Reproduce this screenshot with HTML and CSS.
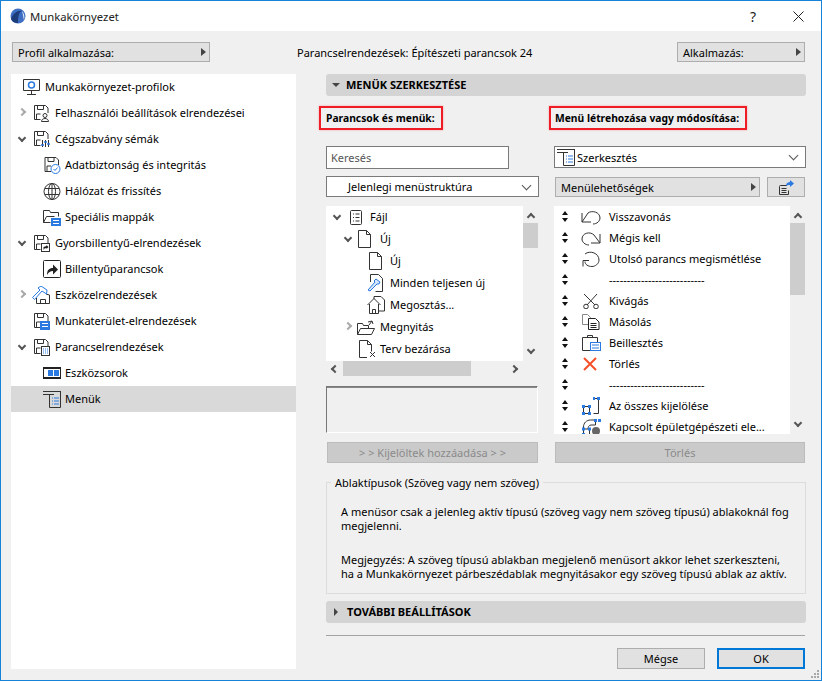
FILE: index.html
```html
<!DOCTYPE html>
<html lang="hu">
<head>
<meta charset="utf-8">
<title>Munkakörnyezet</title>
<link rel="stylesheet" href="styles.css">
</head>
<body>
<svg class="defs" width="0" height="0">
<defs>
<g id="floppy" fill="none" stroke="#333"><path d="M7.5 14.5h-6v-14h11l2.500 2.500v5"/><path d="M4.500 .5v4h6v-4M3.500 14v-5h4"/></g>
<g id="doc" fill="none" stroke="#333"><path d="M.5 .5h8l4 4v13h-12zM8.500 .5v4h4"/></g>
</defs>
</svg>
<div class="window">
  <header class="titlebar">
    <svg class="logo" width="16" height="16" viewBox="0 0 16 16"><circle cx="8" cy="8" r="7.500" fill="#3f6fc4"/><path d="M1 11C3 5 8 2 12 3c-3 1-4 5-4 12-3 0-6-1-7-4z" fill="#1d3d7a"/><path d="M12 3c2 2 3 6 2 9-1-3-1-6-2-9z" fill="#dfe8f7"/></svg>
    <span class="title">Munkakörnyezet</span>
    <span class="help">?</span>
    <svg class="close" width="11" height="11" viewBox="0 0 11 11"><path d="M.5 .5l10 10M10.500 .5l-10 10" stroke="#222" fill="none"/></svg>
  </header>
  <div class="toolbar">
    <button class="popup profile"><span>Profil alkalmazása:</span><i class="tri"></i></button>
    <span class="current">Parancselrendezések: Építészeti parancsok 24</span>
    <button class="popup apply"><span>Alkalmazás:</span><i class="tri"></i></button>
  </div>
  <div class="content">
    <nav class="tree">
      <div class="node l0"><svg class="ico" width="17" height="17" viewBox="0 0 17 17"><path d="M.5 .5h16v11H.5zM8.500 11.500v4M4 15.500h9" fill="none" stroke="#333"/><circle cx="8.500" cy="6" r="3" fill="none" stroke="#2a7ae2" stroke-width="1.500"/></svg><span>Munkakörnyezet-profilok</span></div>
      <div class="node l1"><i class="chev right"></i><svg class="ico" width="17" height="17" viewBox="0 0 17 17"><use href="#floppy"/><circle cx="12" cy="10.500" r="2" fill="none" stroke="#333"/><path d="M8.500 16.500c0-4 7-4 7 0z" fill="none" stroke="#333"/></svg><span>Felhasználói beállítások elrendezései</span></div>
      <div class="node l1"><i class="chev down"></i><svg class="ico" width="17" height="17" viewBox="0 0 17 17"><use href="#floppy"/><path d="M9.500 9v7M12.500 9v7M15.500 9v7" stroke="#333" fill="none"/><path d="M8 14h3M11 11h3M14 13h3" stroke="#2a7ae2" stroke-width="1.500" fill="none"/></svg><span>Cégszabvány sémák</span></div>
      <div class="node l2"><svg class="ico" width="17" height="17" viewBox="0 0 17 17"><use href="#floppy"/><circle cx="12" cy="12" r="4.500" fill="#fff" stroke="#2a7ae2"/><path d="M10 12l1.500 1.500 2.500-3" stroke="#2a7ae2" fill="none"/></svg><span>Adatbiztonság és integritás</span></div>
      <div class="node l2"><svg class="ico" width="17" height="17" viewBox="0 0 17 17"><g fill="none" stroke="#333"><circle cx="8.500" cy="8.500" r="8"/><ellipse cx="8.500" cy="8.500" rx="3.500" ry="8"/><path d="M1.500 5.500h14M1.500 11.500h14M8.500 .5v16"/></g></svg><span>Hálózat és frissítés</span></div>
      <div class="node l2"><svg class="ico" width="18" height="17" viewBox="0 0 18 17"><path d="M.5 13.500v-12h6l1 2h8v4M.5 13.500l3-6h8M.5 13.500h7" fill="none" stroke="#333"/><rect x="8" y="9" width="10" height="8" fill="#2a7ae2"/><path d="M10 11.500h6M10 14.500h6" stroke="#fff"/></svg><span>Speciális mappák</span></div>
      <div class="node l1"><i class="chev down"></i><svg class="ico" width="17" height="17" viewBox="0 0 17 17"><use href="#floppy"/><rect x="8.500" y="8.500" width="8" height="8" fill="#fff" stroke="#333"/><path d="M10.500 15v-3l3-1v-1l2 2-2 2v-1l-2 .5z" fill="#222"/></svg><span>Gyorsbillentyű-elrendezések</span></div>
      <div class="node l2"><svg class="ico" width="18" height="18" viewBox="0 0 18 18"><rect x=".5" y=".5" width="17" height="17" rx="1" fill="#fff" stroke="#222"/><path d="M4 15c0-5 2-7 6-7V4.500l5 5-5 5V11c-3 0-4 1-6 4z" fill="#222"/></svg><span>Billentyűparancsok</span></div>
      <div class="node l1"><i class="chev right"></i><svg class="ico wide" width="18" height="18" viewBox="0 0 18 18"><path d="M4.500 17.500V12M4.500 17.500h13V9L14 8M8.500 17.500v-4h5v4" fill="none" stroke="#333"/><path d="M6 2l3-2 6 4-.5 4L10 5 2.500 13.500l-2-2L8 4z" fill="#fff" stroke="#2a7ae2"/></svg><span>Eszközelrendezések</span></div>
      <div class="node l1 nochev"><svg class="ico" width="17" height="17" viewBox="0 0 17 17"><use href="#floppy"/><rect x="7" y="8" width="10" height="9" fill="#2a7ae2"/><path d="M9 10.500h6M9 13.500h6" stroke="#fff"/></svg><span>Munkaterület-elrendezések</span></div>
      <div class="node l1"><i class="chev down"></i><svg class="ico" width="17" height="17" viewBox="0 0 17 17"><use href="#floppy"/><rect x="8.500" y="7.500" width="8" height="9" fill="#fff" stroke="#333"/><path d="M10 10h5M10 12h5M10 14h5" stroke="#2a7ae2" stroke-dasharray="1 1"/></svg><span>Parancselrendezések</span></div>
      <div class="node l2"><svg class="ico" width="18" height="12" viewBox="0 0 18 12"><rect width="18" height="12" fill="#222"/><rect x="1" y="2" width="16" height="8" fill="#fff"/><rect x="5" y="3" width="5" height="6" fill="#2a7ae2"/><rect x="11" y="3" width="5" height="6" fill="#2a7ae2"/></svg><span>Eszközsorok</span></div>
      <div class="node l2 selected"><svg class="ico" width="18" height="17" viewBox="0 0 18 17"><g fill="none" stroke="#333"><path d="M0 .5h18M0 3.500h11M6.500 3.500v13h11v-16"/></g><path d="M9 7h1M11 7h5M9 10h1M11 10h5M9 13h1M11 13h5" stroke="#2a7ae2"/></svg><span>Menük</span></div>
    </nav>
    <main class="panel">
      <div class="section open"><i class="tri-down"></i><span>MENÜK SZERKESZTÉSE</span></div>
      <div class="columns">
        <div class="col left">
          <div class="mark"><span>Parancsok és menük:</span></div>
          <div class="search">Keresés</div>
          <div class="combo plain"><span class="indent">Jelenlegi menüstruktúra</span><i class="caret"></i></div>
          <div class="scrollframe">
            <div class="listbox cmdtree">
              <div class="row r0"><i class="chev down"></i><svg class="ico" width="12" height="15" viewBox="0 0 12 15"><path d="M1.500 .5h9a1 1 0 0 1 1 1v12a1 1 0 0 1-1 1h-9a1 1 0 0 1-1-1v-12a1 1 0 0 1 1-1zM3 4h1M5.500 4h4M3 7.500h1M5.500 7.500h4M3 11h1M5.500 11h4" fill="none" stroke="#333"/></svg><span>Fájl</span></div>
              <div class="row r1"><i class="chev down"></i><svg class="ico" width="13" height="18" viewBox="0 0 13 18"><use href="#doc"/></svg><span>Új</span></div>
              <div class="row r2"><svg class="ico" width="13" height="18" viewBox="0 0 13 18"><use href="#doc"/></svg><span>Új</span></div>
              <div class="row r2"><svg class="ico all" width="16" height="18" viewBox="0 0 16 18"><path d="M3.500 8v-7.500h8l4 4v13h-7" fill="none" stroke="#333"/><path d="M1 16l7-8-1-1 2-2 4 3-1 2-2 0-7 7z" fill="#d5e5fa" stroke="#2a7ae2"/></svg><span>Minden teljesen új</span></div>
              <div class="row r2"><svg class="ico share" width="18" height="18" viewBox="0 0 18 18"><path d="M7 3v-2.500h7l3.500 3.500v11h-6M.5 9l6.500-6.500 6.500 6.500M2.500 8v9.500h9V8M5.500 17.500v-4h3v4" fill="none" stroke="#333"/></svg><span>Megosztás...</span></div>
              <div class="row r1"><i class="chev right"></i><svg class="ico open-ico" width="18" height="17" viewBox="0 0 18 17"><path d="M.5 15.500v-11h5l1 2h5v3M.5 15.500l3-6h14l-3 6zM12 6l3-4 1 3M15 2l-4 1" fill="none" stroke="#333"/></svg><span>Megnyitás</span></div>
              <div class="row r1"><svg class="ico close-ico" width="17" height="18" viewBox="0 0 17 18"><path d="M8 17.500H.5V.5h8l4 4v7M8.500 .5v4h4M11 12l5 5M16 12l-5 5" fill="none" stroke="#333"/></svg><span>Terv bezárása</span></div>
            </div>
            <div class="vscroll short"><i class="sb up"></i><b class="thumb"></b><i class="sb dn"></i></div>
            <div class="hscroll"><i class="sb lt"></i><b class="thumb"></b><i class="sb rt"></i></div>
          </div>
          <div class="preview"></div>
          <button class="btn disabled">&gt; &gt; Kijelöltek hozzáadása &gt; &gt;</button>
        </div>
        <div class="col right">
          <div class="mark"><span>Menü létrehozása vagy módosítása:</span></div>
          <div class="combo big"><svg class="ico" width="18" height="17" viewBox="0 0 18 17"><g fill="none" stroke="#333"><path d="M0 .5h18M0 3.500h11M6.500 3.500v13h11v-16"/></g><path d="M9 7h1M11 7h5M9 10h1M11 10h5M9 13h1M11 13h5" stroke="#2a7ae2"/></svg><span>Szerkesztés</span><i class="caret"></i></div>
          <div class="optrow">
            <button class="popup opts"><span>Menülehetőségek</span><i class="tri"></i></button>
            <button class="popup iconbtn"><svg width="18" height="17" viewBox="0 0 18 17"><path d="M10 6.500H3.500a1 1 0 0 0-1 1v8h9v-4M4.500 9.500h5M4.500 11.500h5M4.500 13.500h5" fill="none" stroke="#333"/><path d="M9 7c0-3 2-4 4-4V1l4 3.500L13 8V6c-2 0-3 0-4 1z" fill="#2a7ae2"/></svg></button>
          </div>
          <div class="scrollframe tall">
            <div class="listbox menulist">
              <div class="mrow"><i class="updn"></i><span class="mi"><svg width="20" height="16" viewBox="0 0 20 16"><path d="M1 13V4M1 13h9M1 13l6-9c4-3 12-1 12 5 0 3-3 6-7 6" fill="none" stroke="#333"/></svg></span><span>Visszavonás</span></div>
              <div class="mrow"><i class="updn"></i><span class="mi"><svg width="20" height="16" viewBox="0 0 20 16"><path d="M19 13V4M19 13h-9M19 13L13 5C9 1 1 3 1 9c0 3 3 6 7 6" fill="none" stroke="#333"/></svg></span><span>Mégis kell</span></div>
              <div class="mrow"><i class="updn"></i><span class="mi"><svg width="20" height="16" viewBox="0 0 20 16"><path d="M4 3c5-4 14-1 14 6 0 4-4 6.500-7 6.500-4 0-7-2-7-5M2 15.500V9.500h6" fill="none" stroke="#333"/></svg></span><span>Utolsó parancs megismétlése</span></div>
              <div class="mrow"><i class="updn"></i><span class="mi"></span><span>---------------------------</span></div>
              <div class="mrow"><i class="updn"></i><span class="mi"><svg width="20" height="16" viewBox="0 0 20 16"><path d="M3 1l11 11M16 1L6 12" fill="none" stroke="#333"/><circle cx="5" cy="13.500" r="2.300" fill="none" stroke="#333"/><circle cx="15" cy="13.500" r="2.300" fill="none" stroke="#333"/></svg></span><span>Kivágás</span></div>
              <div class="mrow"><i class="updn"></i><span class="mi"><svg width="20" height="16" viewBox="0 0 20 16"><path d="M7 10.500H1.500V.5h5l3 3v1" fill="none" stroke="#888"/><path d="M7.500 15.500v-11h7l3.500 3.500v7.500zM9.500 9.500h6M9.500 11.500h6M9.500 13.500h6" fill="none" stroke="#222"/></svg></span><span>Másolás</span></div>
              <div class="mrow"><i class="updn"></i><span class="mi"><svg width="20" height="16" viewBox="0 0 20 16"><path d="M11 15.500H1.500V2.500h15v5M6.500 2.500V.5h5v2" fill="none" stroke="#333"/><rect x="9.500" y="7.500" width="10" height="8" fill="#fff" stroke="#2a7ae2"/><path d="M11 10h7M11 13h7" stroke="#2a7ae2"/></svg></span><span>Beillesztés</span></div>
              <div class="mrow"><i class="updn"></i><span class="mi"><svg width="20" height="16" viewBox="0 0 20 16"><path d="M3 2l12 12M15 2L3 14" fill="none" stroke="#f4502a" stroke-width="2"/></svg></span><span>Törlés</span></div>
              <div class="mrow"><i class="updn"></i><span class="mi"></span><span>---------------------------</span></div>
              <div class="mrow"><i class="updn"></i><span class="mi"><svg width="20" height="18" viewBox="0 0 20 18"><path d="M2.500 9.500h6v7h-6zM12.500 1.500h5v15h-5" fill="none" stroke="#333"/><path d="M1 8h3v3H1zM7 8h3v3H7zM1 15h3v3H1zM7 15h3v3H7zM12 0h2v3h-2zM16 0h3v3h-3z" fill="#2a7ae2"/></svg></span><span>Az összes kijelölése</span></div>
              <div class="mrow"><i class="updn"></i><span class="mi"><svg width="20" height="18" viewBox="0 0 20 18"><path d="M2.500 11v-2c0-4 3-7 7-7h5M2.500 11h6v6h-6z M7 11c0-2 1-4 3-4h4.500V2" fill="none" stroke="#333"/><path d="M1 9.500h3v3H1zM7 9.500h3v3H7zM1 15h3v3H1zM13 1h3v3h-3zM17 1h3v3h-3z" fill="#2a7ae2"/><circle cx="15" cy="13" r="4" fill="#666"/></svg></span><span>Kapcsolt épületgépészeti ele...</span></div>
            </div>
            <div class="vscroll"><i class="sb up"></i><b class="thumb"></b><i class="sb dn"></i></div>
          </div>
          <button class="btn disabled del">Törlés</button>
        </div>
      </div>
      <section class="group">
        <div class="legend">Ablaktípusok (Szöveg vagy nem szöveg)</div>
        <p>A menüsor csak a jelenleg aktív típusú (szöveg vagy nem szöveg típusú) ablakoknál fog<br>megjelenni.</p>
        <p>Megjegyzés: A szöveg típusú ablakban megjelenő menüsort akkor lehet szerkeszteni,<br>ha a Munkakörnyezet párbeszédablak megnyitásakor egy szöveg típusú ablak az aktív.</p>
      </section>
      <div class="section closed"><i class="tri small"></i><span>TOVÁBBI BEÁLLÍTÁSOK</span></div>
      <hr class="sep">
      <div class="actions">
        <button class="btn cancel">Mégse</button>
        <button class="btn ok">OK</button>
      </div>
    </main>
  </div>
  <svg class="grip" width="9" height="9" viewBox="0 0 9 9"><path d="M6 0h2v2H6zM3 3h2v2H3zM6 3h2v2H6zM0 6h2v2H0zM3 6h2v2H3zM6 6h2v2H6z" fill="#a8a8a8"/></svg>
</div>
</body>
</html>
```
FILE: styles.css
```css
* { box-sizing: border-box; }
html, body { margin: 0; padding: 0; }
body { width: 822px; height: 681px; overflow: hidden; font-family: "Noto Sans", "Open Sans", sans-serif; font-size: 11px; color: #000; }
.defs { position: absolute; }
.window { position: relative; width: 822px; height: 681px; background: #f0f0f0; border: 1px solid #1683d8; display: flex; flex-direction: column; }
.titlebar { height: 30px; background: #fff; display: flex; align-items: center; padding-left: 9px; flex: none; }
.logo { margin-right: 4px; }
.title { font-size: 11.300px; color: #222; }
.help { margin-left: auto; font-size: 14px; margin-right: 37px; color: #222; }
.close { margin-right: 17px; }
.toolbar { display: flex; align-items: center; height: 20px; margin-top: 11px; padding-left: 11px; flex: none; }
button { font: inherit; color: inherit; padding: 0; margin: 0; }
.popup { display: flex; align-items: center; justify-content: space-between; height: 20px; background: #e1e1e1; border: 1px solid #adadad; padding: 0 2px 0 5px; text-align: left; }
.profile { width: 198px; }
.current { margin-left: 87px; width: 380px; }
.apply { width: 128px; }
.tri { width: 0; height: 0; border-left: 5px solid #444; border-top: 4px solid transparent; border-bottom: 4px solid transparent; margin-right: 1px; }
.tri.small { border-left-width: 4px; }
.tri-down { width: 0; height: 0; border-top: 4px solid #444; border-left: 4px solid transparent; border-right: 4px solid transparent; }
.content { display: flex; flex: 1; margin-top: 12px; padding-left: 10px; min-height: 0; }
.tree { width: 285px; height: 595px; background: #fff; flex: none; }
.node { height: 26px; display: flex; align-items: center; position: relative; white-space: nowrap; }
.node span { padding-bottom: 1px; }
.node .ico { flex: none; margin-right: 5px; }
.l0 { padding-left: 12px; }
.l1 { padding-left: 22px; }
.l2 { padding-left: 32px; }
.l2 .ico { width: 18px; margin-right: 4px; }
.node .ico.wide { margin-left: -1px; }
.selected { background: #d9d9d9; }
.chev { position: absolute; width: 6px; height: 6px; border-right: 2px solid #555; border-bottom: 2px solid #555; }
.node .chev { left: 8px; top: 9px; }
.chev.down { transform: rotate(45deg); }
.chev.right { transform: rotate(-45deg); border-color: #aaa; }
.panel { width: 480px; margin-left: 30px; flex: none; display: flex; flex-direction: column; }
.section { height: 22px; background: #d4d4d4; border-radius: 3px; display: flex; align-items: center; font-weight: 700; font-size: 11px; flex: none; }
.section span { padding-bottom: 1px; }
.section.open { padding-left: 6px; gap: 6px; }
.section.closed { margin-top: 7px; padding-left: 8px; gap: 8px; }
.columns { display: flex; gap: 16px; margin-top: 10px; }
.col { display: flex; flex-direction: column; }
.col.left { width: 213px; }
.col.right { width: 251px; }
.mark { align-self: flex-start; margin-left: -7px; height: 24px; border: 2px solid #ee1c25; box-shadow: 0 0 2px #f9a0a4; display: flex; align-items: center; padding: 0 6px 0 5px; font-weight: 700; font-size: 10.300px; }
.col.right .mark { margin-left: -6px; padding-left: 4px; }
.search { width: 183px; height: 23px; margin-top: 16px; background: #fff; border: 1px solid #7a7a7a; display: flex; align-items: center; padding-left: 4px; color: #555; flex: none; }
.combo { display: flex; align-items: center; background: #fff; border: 1px solid #7a7a7a; position: relative; flex: none; }
.combo.plain { height: 21px; margin-top: 7px; }
.indent { padding-left: 21px; }
.combo.big { height: 22px; margin-top: 16px; margin-left: -1px; gap: 2px; width: 252px; padding-left: 2px; }
.caret { position: absolute; right: 8px; top: 5px; width: 7px; height: 7px; border-right: 1px solid #555; border-bottom: 1px solid #555; transform: rotate(45deg); }
.scrollframe { position: relative; margin-top: 9px; height: 170px; flex: none; width: 212px; }
.scrollframe.tall { width: 251px; height: 228px; margin-left: -1px; }
.listbox { background: #fff; overflow: hidden; }
.cmdtree { width: 197px; height: 155px; }
.row { height: 22px; display: flex; align-items: center; position: relative; white-space: nowrap; }
.row span { padding-bottom: 2px; }
.row .ico { flex: none; }
.row .chev { top: 7px; width: 6px; height: 6px; }
.r0 { padding-left: 24px; }
.r0 .chev { left: 8px; }
.r0 .ico { margin-right: 8px; }
.r1 { padding-left: 32px; }
.r1 .chev { left: 19px; }
.r1 .ico { margin-right: 9px; }
.r2 { padding-left: 43px; }
.r2 .ico { margin-right: 8px; }
.r2 .all { margin-left: -2px; margin-right: 7px; }
.r2 .share { margin-left: -2px; margin-right: 5px; }
.r1 .open-ico { margin-left: -1px; margin-right: 5px; }
.r1 .close-ico { margin-left: 1px; margin-right: 4px; }
.vscroll { position: absolute; left: 197px; top: 0; width: 15px; height: 155px; background: #f0f0f0; }
.tall .vscroll { left: 236px; height: 228px; }
.vscroll .thumb { position: absolute; left: 0; top: 17px; width: 15px; height: 25px; background: #cdcdcd; }
.tall .vscroll .thumb { height: 72px; }
.hscroll { position: absolute; left: 0; top: 155px; width: 197px; height: 15px; background: #f0f0f0; }
.hscroll .thumb { position: absolute; left: 17px; top: 0; height: 15px; width: 128px; background: #cdcdcd; }
.sb { position: absolute; width: 6px; height: 6px; border-top: 2px solid #555; border-left: 2px solid #555; }
.sb.up { left: 5px; top: 8px; transform: rotate(45deg); }
.sb.dn { left: 5px; bottom: 8px; transform: rotate(225deg); }
.sb.lt { left: 6px; top: 5px; transform: rotate(-45deg); }
.sb.rt { right: 6px; top: 5px; transform: rotate(135deg); }
.preview { width: 212px; height: 47px; margin-top: 10px; background: #f0f0f0; border: 1px solid; border-color: #777 #fff #fff #777; box-shadow: inset 0 1px 0 #888; flex: none; }
.btn { height: 21px; background: #e1e1e1; border: 1px solid #adadad; text-align: center; flex: none; }
.btn.disabled { background: #cacaca; border-color: #bcbcbc; color: #8a8a8a; margin-top: 9px; margin-left: 1px; width: 211px; }
.btn.del { width: 250px; margin-left: 0; margin-top: 8px; }
.optrow { display: flex; gap: 7px; margin-top: 9px; flex: none; }
.opts { width: 205px; }
.iconbtn { width: 38px; justify-content: center; padding: 0; }
.menulist { width: 236px; height: 228px; }
.mrow { height: 21px; display: flex; align-items: center; white-space: nowrap; position: relative; padding-left: 8px; }
.updn { width: 7px; height: 11px; flex: none; position: relative; }
.updn::before, .updn::after { content: ""; position: absolute; left: 0; border-left: 3.500px solid transparent; border-right: 3.500px solid transparent; }
.updn::before { top: 0; border-bottom: 4px solid #111; }
.updn::after { bottom: 0; border-top: 4px solid #111; }
.mi { width: 20px; height: 18px; display: flex; align-items: center; margin: 0 8px 0 12px; flex: none; }
.group { height: 112px; margin-top: 19px; border: 1px solid #dcdcdc; position: relative; padding: 22px 8px 0 14px; line-height: 14px; flex: none; }
.group p { margin: 0 0 20px; }
.legend { position: absolute; left: 4px; top: -7px; background: #f0f0f0; padding: 0 4px; }
.sep { width: 479px; margin: 12px 0 0; border: 0; border-top: 1px solid #a3a3a3; height: 1px; flex: none; }
.actions { display: flex; justify-content: flex-end; gap: 12px; margin-top: 12px; width: 479px; }
.cancel, .ok { width: 88px; }
.ok { border: 2px solid #0078d7; }
.grip { position: absolute; right: 1px; bottom: 1px; }
```
